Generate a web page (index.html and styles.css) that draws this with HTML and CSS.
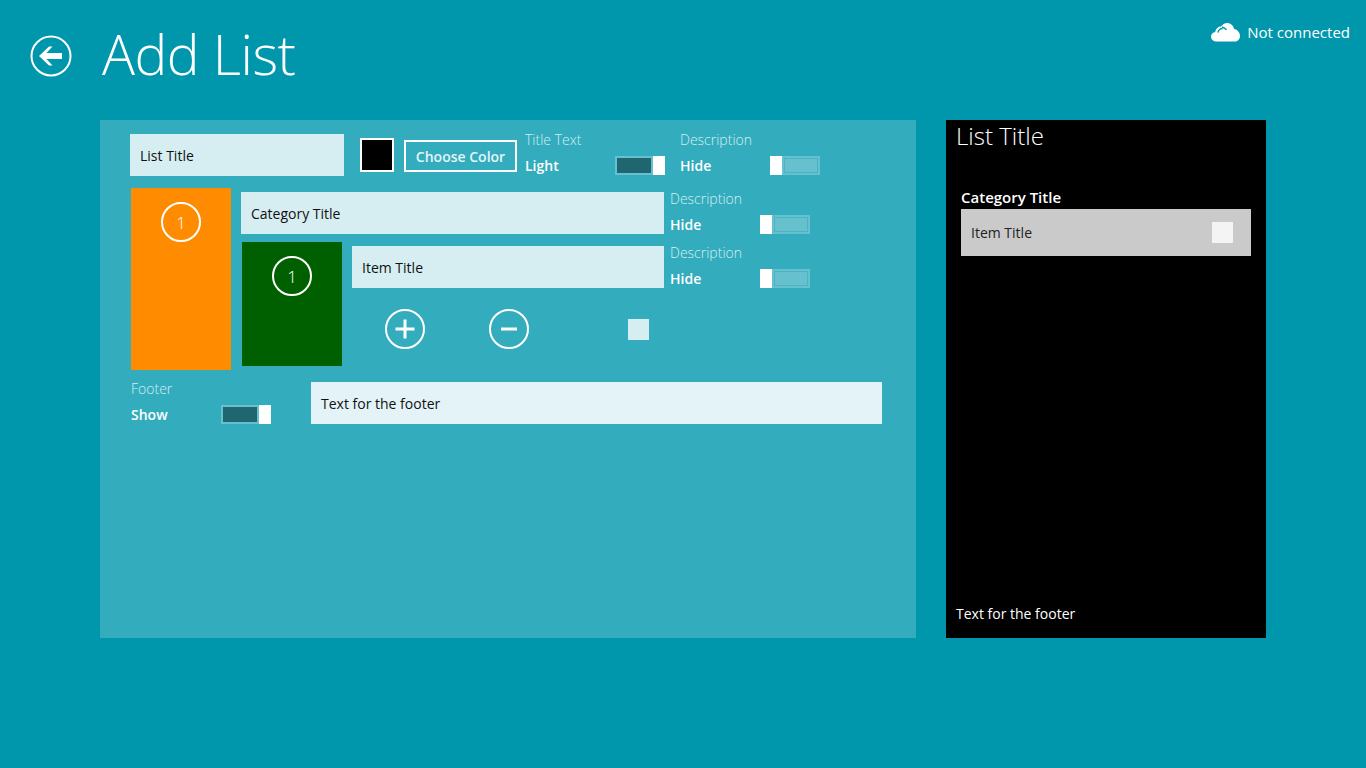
FILE: index.html
```html
<!DOCTYPE html>
<html lang="en">
<head>
  <meta charset="UTF-8" />
  <title>Add List</title>
  <link rel="stylesheet" href="styles.css">
</head>
<body>
  <header class="top">
    <div class="back">
      <svg width="42" height="42" viewBox="0 0 42 42">
        <circle cx="21" cy="21" r="19.5" fill="none" stroke="#fff" stroke-width="2"/>
        <path d="M9 21 L19 11.5 L22.5 11.5 L16.5 18 L32 18 L32 24 L16.5 24 L22.5 30.5 L19 30.5 Z" fill="#fff"/>
      </svg>
    </div>
    <h1>Add List</h1>
    <div class="status">
      <svg width="29" height="19" viewBox="0 0 29 19">
        <path d="M6 18.5 C2.5 18.5 0 16.5 0 13.5 C0 11 2 9.2 4.2 9 C4.8 5.5 7.5 3.5 10 3.5 C12 1 14 0 16 0 C19.5 0 22.5 2.5 23 6 C26.5 6.5 29 9.5 29 13 C29 16.5 26.5 18.5 23.5 18.5 Z" fill="#fff"/>
        <path d="M7 9.5 C7.5 7 9.5 5.5 11.5 5.5 M11 4 C14 5 15 6 15.5 7" fill="none" stroke="#0097ac" stroke-width="1.4"/>
      </svg>
      <span>Not connected</span>
    </div>
  </header>

  <main class="content">
    <section class="editor">
      <div class="row-title">
        <div class="field field-title">List Title</div>
        <div class="swatch"></div>
        <div class="choose">Choose Color</div>
        <div class="opt opt-text">
          <div class="opt-label">Title Text</div>
          <div class="opt-line">
            <strong>Light</strong>
            <div class="toggle"><div class="track on"></div><div class="thumb"></div></div>
          </div>
        </div>
        <div class="opt opt-desc">
          <div class="opt-label">Description</div>
          <div class="opt-line">
            <strong>Hide</strong>
            <div class="toggle"><div class="thumb"></div><div class="track"></div></div>
          </div>
        </div>
      </div>

      <div class="row-cat">
        <div class="tile tile-orange"><div class="num">1</div></div>
        <div class="cat-body">
          <div class="cat-head">
            <div class="field field-cat">Category Title</div>
            <div class="opt">
              <div class="opt-label">Description</div>
              <div class="opt-line">
                <strong>Hide</strong>
                <div class="toggle"><div class="thumb"></div><div class="track"></div></div>
              </div>
            </div>
          </div>
          <div class="item-row">
            <div class="tile tile-green"><div class="num">1</div></div>
            <div class="item-body">
              <div class="item-head">
                <div class="field field-item">Item Title</div>
                <div class="opt">
                  <div class="opt-label">Description</div>
                  <div class="opt-line">
                    <strong>Hide</strong>
                    <div class="toggle"><div class="thumb"></div><div class="track"></div></div>
                  </div>
                </div>
              </div>
              <div class="actions">
                <svg class="act-add" width="40" height="40" viewBox="0 0 40 40">
                  <circle cx="20" cy="20" r="19" fill="none" stroke="#fff" stroke-width="2"/>
                  <path d="M20 10.5 V29.5 M10.5 20 H29.5" stroke="#fff" stroke-width="3"/>
                </svg>
                <svg class="act-remove" width="40" height="40" viewBox="0 0 40 40">
                  <circle cx="20" cy="20" r="19" fill="none" stroke="#fff" stroke-width="2"/>
                  <path d="M12 20 H28" stroke="#fff" stroke-width="3"/>
                </svg>
                <div class="check"></div>
              </div>
            </div>
          </div>
        </div>
      </div>

      <div class="row-footer">
        <div class="opt opt-footer">
          <div class="opt-label">Footer</div>
          <div class="opt-line">
            <strong>Show</strong>
            <div class="toggle"><div class="track on"></div><div class="thumb"></div></div>
          </div>
        </div>
        <div class="field field-footer">Text for the footer</div>
      </div>
    </section>

    <aside class="preview">
      <div class="pv-title">List Title</div>
      <div class="pv-cat">Category Title</div>
      <div class="pv-item">
        <span>Item Title</span>
        <div class="pv-check"></div>
      </div>
      <div class="pv-footer">Text for the footer</div>
    </aside>
  </main>
</body>
</html>
```

FILE: styles.css
```css
html, body {
  margin: 0;
  height: 100%;
}
body {
  background: #0097ac;
  color: #fff;
  font-family: "Open Sans", "Noto Sans", Arial, sans-serif;
  font-size: 14px;
  overflow: hidden;
}

.top {
  display: flex;
  align-items: flex-start;
  height: 120px;
  padding-left: 30px;
  box-sizing: border-box;
}
.back {
  margin-top: 35px;
  height: 42px;
}
h1 {
  margin: 19px 0 0 30px;
  font-size: 55px;
  line-height: 70px;
  font-weight: 300;
  letter-spacing: -0.5px;
}
.status {
  display: flex;
  align-items: center;
  margin-left: auto;
  margin-top: 22px;
  margin-right: 16px;
  height: 20px;
  font-size: 15px;
}
.status span {
  margin-left: 7px;
}

.content {
  display: flex;
  padding-left: 100px;
}
.editor {
  width: 816px;
  height: 518px;
  background: #33acbd;
  padding: 14px 0 0 30px;
  box-sizing: border-box;
}
.preview {
  position: relative;
  width: 320px;
  height: 518px;
  margin-left: 30px;
  background: #000;
}

.field {
  display: flex;
  align-items: center;
  height: 42px;
  padding-left: 10px;
  box-sizing: border-box;
  background: #d6eef2;
  color: #111;
}

.row-title {
  display: flex;
  height: 54px;
}
.field-title {
  width: 214px;
}
.swatch {
  width: 34px;
  height: 34px;
  margin: 4px 0 0 16px;
  box-sizing: border-box;
  background: #000;
  border: 2px solid #fff;
}
.choose {
  display: flex;
  align-items: center;
  justify-content: center;
  width: 113px;
  height: 32px;
  margin: 6px 0 0 10px;
  box-sizing: border-box;
  border: 2px solid #fff;
  color: #e6f5f7;
  font-weight: 600;
}

.opt {
  width: 140px;
  margin-left: 6px;
}
.opt-text {
  margin-left: 8px;
  width: 140px;
  margin-top: -4px;
}
.opt-desc {
  margin-left: 15px;
  margin-top: -4px;
}
.opt-label {
  height: 20px;
  line-height: 20px;
  color: #d6eef2;
  font-weight: 300;
}
.opt-line {
  display: flex;
  align-items: center;
  justify-content: space-between;
  margin-top: 5px;
  height: 20px;
}
.opt-line strong {
  font-weight: 600;
}
.toggle {
  display: flex;
  width: 50px;
  height: 19px;
}
.thumb {
  width: 12px;
  background: #fff;
}
.track {
  flex: 1;
  background: #66c0cd;
  border: 2px solid #66c0cd;
  box-shadow: inset 0 0 0 1px #4bb4c4;
}
.track.on {
  background: #1f6671;
  box-shadow: none;
}

.row-cat {
  display: flex;
  height: 182px;
}
.tile {
  display: flex;
  justify-content: center;
  width: 100px;
}
.tile-orange {
  height: 182px;
  margin-left: 1px;
  background: #ff8c00;
  padding-top: 14px;
  box-sizing: border-box;
}
.tile-green {
  height: 124px;
  background: #006000;
  padding-top: 14px;
  box-sizing: border-box;
}
.num {
  width: 40px;
  height: 40px;
  box-sizing: border-box;
  border: 2px solid #fff;
  border-radius: 50%;
  text-align: center;
  line-height: 38px;
  font-size: 17px;
  font-weight: 300;
}

.cat-body {
  margin-left: 10px;
  padding-top: 4px;
}
.cat-head {
  display: flex;
  height: 50px;
}
.field-cat {
  width: 423px;
}
.item-row {
  display: flex;
  margin-left: 1px;
}
.item-body {
  margin-left: 10px;
  padding-top: 4px;
}
.item-head {
  display: flex;
  height: 63px;
}
.field-item {
  width: 312px;
}
.cat-head .opt,
.item-head .opt {
  margin-top: -3px;
}
.actions {
  display: flex;
  align-items: center;
  height: 40px;
}
.act-add {
  margin-left: 33px;
}
.act-remove {
  margin-left: 64px;
}
.check {
  width: 21px;
  height: 21px;
  margin-left: 99px;
  background: #d6eef2;
}

.row-footer {
  display: flex;
  margin-top: 12px;
}
.opt-footer {
  margin: -3px 0 0 1px;
}
.field-footer {
  width: 571px;
  margin-left: 40px;
  background: #e3f3f7;
}

.pv-title {
  position: absolute;
  left: 10px;
  top: -1px;
  font-size: 24px;
  line-height: 34px;
  font-weight: 300;
}
.pv-cat {
  padding: 66px 0 0 15px;
  height: 23px;
  line-height: 23px;
  font-size: 15px;
  font-weight: 600;
}
.pv-item {
  display: flex;
  align-items: center;
  justify-content: space-between;
  height: 47px;
  margin: 0 15px;
  padding: 0 18px 0 10px;
  background: #cacaca;
  color: #222;
}
.pv-check {
  width: 21px;
  height: 21px;
  background: #f4f4f4;
}
.pv-footer {
  position: absolute;
  left: 10px;
  bottom: 14px;
  line-height: 20px;
}
```
